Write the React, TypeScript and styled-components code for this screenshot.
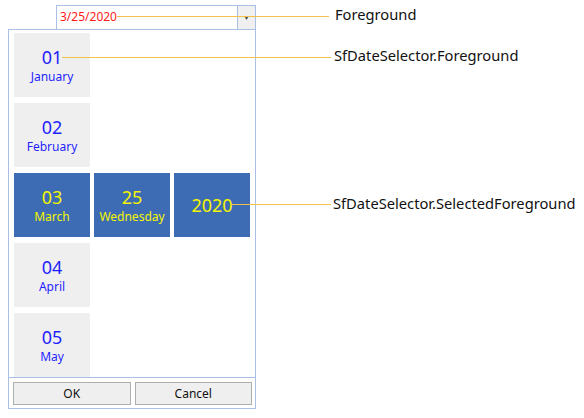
import React from 'react';
import styled, { createGlobalStyle } from 'styled-components';

const GlobalStyle = createGlobalStyle`
  html, body { margin: 0; padding: 0; background: #ffffff; }
  body { font-family: "Noto Sans", "Open Sans", sans-serif; }
`;

const Page = styled.div`
  position: relative;
  width: 584px;
  height: 418px;
  overflow: hidden;
  background: #ffffff;
`;

const Widget = styled.div`
  display: flex;
  flex-direction: column;
  align-items: flex-end;
  width: 248px;
  padding: 5px 0 0 8px;
`;

const Combo = styled.div`
  display: flex;
  width: 200px;
  height: 24px;
  box-sizing: border-box;
  border: 1px solid #a9bfe6;
  border-bottom-width: 0;
  background: #ffffff;
`;

const ComboText = styled.div`
  flex: 1;
  padding-left: 3px;
  font-size: 12px;
  line-height: 22px;
  color: #ff1a1a;
`;

const DropButton = styled.div`
  width: 17px;
  display: flex;
  align-items: center;
  justify-content: center;
  background: #f0f0f0;
  border-left: 1px solid #a9bfe6;
  color: #444;
  font-size: 7px;
`;

const Popup = styled.div`
  width: 248px;
  height: 380px;
  box-sizing: border-box;
  border: 1px solid #a9bfe6;
  display: flex;
  flex-direction: column;
  background: #ffffff;
`;

const Grid = styled.div`
  flex: 1;
  display: grid;
  grid-template-columns: repeat(3, 76px);
  grid-auto-rows: 64px;
  column-gap: 4px;
  row-gap: 6px;
  padding: 3px 0 0 5px;
`;

const Tile = styled.div<{ $col: number; $row: number; $selected?: boolean }>`
  grid-column: ${p => p.$col};
  grid-row: ${p => p.$row};
  background: ${p => (p.$selected ? '#3d6cb5' : '#efefef')};
  color: ${p => (p.$selected ? '#f5f500' : '#1f1fff')};
  display: flex;
  flex-direction: column;
  align-items: center;
  justify-content: center;
`;

const Num = styled.div`
  font-size: 18px;
  line-height: 25px;
`;

const Name = styled.div`
  font-size: 12px;
  line-height: 17px;
  margin-top: -2px;
`;

const Footer = styled.div`
  display: flex;
  gap: 4px;
  padding: 4px 3px 3px 4px;
  border-top: 1px solid #a9bfe6;
`;

const Button = styled.div`
  width: 118px;
  height: 23px;
  box-sizing: border-box;
  border: 1px solid #adadad;
  background: #efefef;
  font-size: 12px;
  line-height: 21px;
  text-align: center;
  color: #111;
`;

const Callout = styled.div<{ $left: number; $top: number }>`
  position: absolute;
  left: ${p => p.$left}px;
  top: ${p => p.$top}px;
  display: flex;
  align-items: center;
  height: 20px;
`;

const Line = styled.div<{ $width: number; $drop: number }>`
  width: ${p => p.$width}px;
  height: 1px;
  background: #f2c14a;
  margin-top: ${p => p.$drop}px;
`;

const Label = styled.div<{ $gap: number }>`
  margin-left: ${p => p.$gap}px;
  font-size: 14.7px;
  color: #111;
  white-space: nowrap;
`;

const months = [
  ['01', 'January'],
  ['02', 'February'],
  ['03', 'March'],
  ['04', 'April'],
  ['05', 'May'],
];

export default function App() {
  return (
    <Page>
      <GlobalStyle />
      <Widget>
        <Combo>
          <ComboText>3/25/2020</ComboText>
          <DropButton>▼</DropButton>
        </Combo>
        <Popup>
          <Grid>
            {months.map(([n, m], i) => (
              <Tile key={n} $col={1} $row={i + 1} $selected={i === 2}>
                <Num>{n}</Num>
                <Name>{m}</Name>
              </Tile>
            ))}
            <Tile $col={2} $row={3} $selected>
              <Num>25</Num>
              <Name>Wednesday</Name>
            </Tile>
            <Tile $col={3} $row={3} $selected>
              <Num>2020</Num>
            </Tile>
          </Grid>
          <Footer>
            <Button>OK</Button>
            <Button>Cancel</Button>
          </Footer>
        </Popup>
      </Widget>

      <Callout $left={117} $top={4}>
        <Line $width={212} $drop={4} />
        <Label $gap={6}>Foreground</Label>
      </Callout>
      <Callout $left={62} $top={45}>
        <Line $width={269} $drop={4} />
        <Label $gap={3}>SfDateSelector.Foreground</Label>
      </Callout>
      <Callout $left={231} $top={193}>
        <Line $width={100} $drop={2} />
        <Label $gap={2}>SfDateSelector.SelectedForeground</Label>
      </Callout>
    </Page>
  );
}
